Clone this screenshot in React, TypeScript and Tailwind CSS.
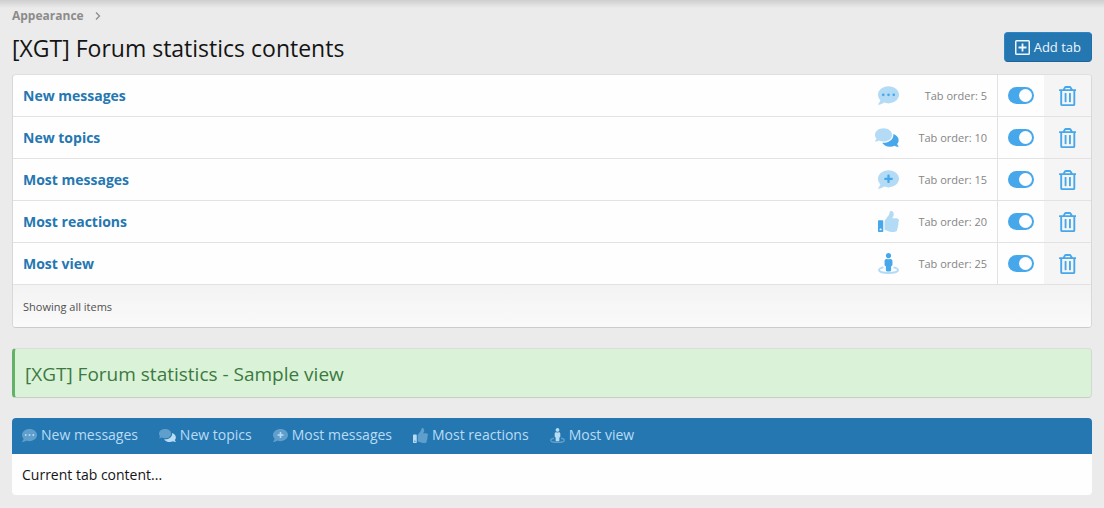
import { useState } from "react";
import type { ReactNode } from "react";

const bubble =
  "M256 32C114.6 32 0 125.1 0 240c0 49.6 21.4 95 57 130.7C44.5 421.1 2.7 466 2.2 466.5c-2.2 2.3-2.8 5.7-1.5 8.7S4.8 480 8 480c66.3 0 116-31.8 140.6-51.4 32.7 12.3 69 19.4 107.4 19.4 141.4 0 256-93.1 256-208S397.4 32 256 32z";

type IconName = "dots" | "comments" | "plus" | "thumb" | "view";

// Two-tone icons: the faded layer sits at 40% opacity
const icons: Record<IconName, { width: number; body: ReactNode }> = {
  dots: {
    width: 512,
    body: (
      <>
        <path opacity=".4" d={bubble} />
        <circle cx="128" cy="240" r="32" />
        <circle cx="256" cy="240" r="32" />
        <circle cx="384" cy="240" r="32" />
      </>
    ),
  },
  comments: {
    width: 576,
    body: (
      <>
        <path
          opacity=".4"
          d="M416 192c0-88.4-93.1-160-208-160S0 103.6 0 192c0 34.3 14.1 65.9 38 92-13.4 30.2-35.5 54.2-35.8 54.5-2.2 2.3-2.8 5.7-1.5 8.7S4.8 352 8 352c36.6 0 66.9-12.3 88.7-25 32.2 15.7 70.3 25 111.3 25 114.9 0 208-71.6 208-160z"
        />
        <path d="M538 412c23.9-26 38-57.7 38-92 0-66.9-53.5-124.2-129.3-148.1.9 6.6 1.3 13.3 1.3 20.1 0 105.9-107.7 192-240 192-10.8 0-21.3-.8-31.7-1.9C207.8 439.6 281.8 480 368 480c41 0 79.1-9.2 111.3-25 21.8 12.7 52.1 25 88.7 25 3.2 0 6.1-1.9 7.3-4.8 1.3-2.9.7-6.3-1.5-8.7-.3-.3-22.4-24.2-35.8-54.5z" />
      </>
    ),
  },
  plus: {
    width: 512,
    body: (
      <>
        <path opacity=".4" d={bubble} />
        <path d="M360 230v20a18 18 0 0 1-18 18h-58v58a18 18 0 0 1-18 18h-20a18 18 0 0 1-18-18v-58h-58a18 18 0 0 1-18-18v-20a18 18 0 0 1 18-18h58v-58a18 18 0 0 1 18-18h20a18 18 0 0 1 18 18v58h58a18 18 0 0 1 18 18z" />
      </>
    ),
  },
  thumb: {
    width: 512,
    body: (
      <>
        <path
          opacity=".4"
          d="M384 81.452c0 42.416-25.97 66.208-33.277 94.548h101.723c33.397 0 59.397 27.746 59.553 58.098.084 17.938-7.546 37.249-19.439 49.197l-.11.11c9.836 23.337 8.237 56.037-9.308 79.469 8.681 25.895-.069 57.704-16.382 74.757 4.298 17.598 2.244 32.575-6.148 44.632C440.202 511.587 389.616 512 346.839 512l-2.845-.001c-48.287-.017-87.806-17.598-119.56-31.725-15.957-7.099-36.821-15.887-52.651-16.178-6.54-.12-11.783-5.457-11.783-11.998v-213.77c0-3.2 1.282-6.271 3.558-8.521 39.614-39.144 56.648-80.587 89.117-113.111 14.804-14.832 20.188-37.236 25.393-58.902C282.515 39.293 291.817 0 312 0c24 0 72 8 72 81.452z"
        />
        <path d="M104 224H24c-13.255 0-24 10.745-24 24v240c0 13.255 10.745 24 24 24h80c13.255 0 24-10.745 24-24V248c0-13.255-10.745-24-24-24zM64 472c-13.255 0-24-10.745-24-24s10.745-24 24-24 24 10.745 24 24-10.745 24-24 24z" />
      </>
    ),
  },
  view: {
    width: 512,
    body: (
      <>
        <path
          opacity=".4"
          fill="none"
          stroke="currentColor"
          strokeWidth="46"
          d="M136 350C66 364 24 388 24 414c0 42 104 74 232 74s232-32 232-74c0-26-42-50-112-64"
        />
        <path d="M256 128c35.35 0 64-28.65 64-64S291.35 0 256 0s-64 28.65-64 64 28.65 64 64 64zm-64 192v96c0 17.67 14.33 32 32 32h64c17.67 0 32-14.33 32-32v-96c17.67 0 32-14.33 32-32v-96c0-26.51-21.49-48-48-48h-11.8c-11.07 5.03-23.26 8-36.2 8s-25.13-2.97-36.2-8H208c-26.51 0-48 21.49-48 48v96c0 17.67 14.33 32 32 32z" />
      </>
    ),
  },
};

const tabs: { title: string; order: number; icon: IconName }[] = [
  { title: "New messages", order: 5, icon: "dots" },
  { title: "New topics", order: 10, icon: "comments" },
  { title: "Most messages", order: 15, icon: "plus" },
  { title: "Most reactions", order: 20, icon: "thumb" },
  { title: "Most view", order: 25, icon: "view" },
];

function TabIcon({ name, className }: { name: IconName; className: string }) {
  const icon = icons[name];
  return (
    <svg viewBox={`0 0 ${icon.width} 512`} fill="currentColor" aria-hidden="true" className={className}>
      {icon.body}
    </svg>
  );
}

function TrashIcon() {
  return (
    <svg viewBox="0 0 448 512" fill="currentColor" aria-hidden="true" className="h-5">
      <path d="M268 416h24a12 12 0 0 0 12-12V188a12 12 0 0 0-12-12h-24a12 12 0 0 0-12 12v216a12 12 0 0 0 12 12zM432 80h-82.41l-34-56.7A48 48 0 0 0 274.41 0H173.59a48 48 0 0 0-41.16 23.3L98.41 80H16A16 16 0 0 0 0 96v16a16 16 0 0 0 16 16h16v336a48 48 0 0 0 48 48h288a48 48 0 0 0 48-48V128h16a16 16 0 0 0 16-16V96a16 16 0 0 0-16-16zM171.84 50.91A6 6 0 0 1 177 48h94a6 6 0 0 1 5.15 2.91L293.61 80H154.39zM368 464H80V128h288zm-212-48h24a12 12 0 0 0 12-12V188a12 12 0 0 0-12-12h-24a12 12 0 0 0-12 12v216a12 12 0 0 0 12 12z" />
    </svg>
  );
}

export default function App() {
  const [enabled, setEnabled] = useState(tabs.map(() => true));

  const toggle = (index: number) => {
    setEnabled(enabled.map((value, i) => (i === index ? !value : value)));
  };

  return (
    <div className="min-h-screen bg-[#ebebeb] font-['Open_Sans','Noto_Sans',sans-serif] text-[14px] leading-5 text-[#141414]">
      {/* Shadow of the header above */}
      <div className="h-2 bg-linear-to-b from-[#cfcfcf] to-[#ebebeb]" />

      <main className="px-3 pb-3">
        <nav aria-label="Breadcrumb" className="flex h-4 items-center gap-2.5 text-[12px] leading-4 font-bold text-[#8c8c8c]">
          <a href="#appearance">Appearance</a>
          <svg viewBox="0 0 8 10" fill="none" stroke="currentColor" strokeWidth="1.3" aria-hidden="true" className="h-2.5 w-2">
            <path d="M2 1.5l3.5 3.5-3.5 3.5" />
          </svg>
        </nav>

        <div className="mt-2 mb-3 flex items-center justify-between">
          <h1 className="pt-0.5 text-[23px] leading-7">[XGT] Forum statistics contents</h1>
          <button className="flex h-[30px] items-center gap-1 rounded border border-t-[#2b86c8] border-r-[#1f6ea8] border-b-[#1f6498] border-l-[#2b86c8] bg-[#2577b1] px-2.5 text-[13px] text-[#edf6fd]">
            <svg viewBox="0 0 15 15" fill="none" stroke="currentColor" aria-hidden="true" className="size-[15px]">
              <rect x=".75" y=".75" width="13.5" height="13.5" rx=".8" strokeWidth="1.5" />
              <path d="M7.5 3.5v8M3.5 7.5h8" strokeWidth="1.8" />
            </svg>
            Add tab
          </button>
        </div>

        <section className="overflow-hidden rounded border border-t-[#dfdfdf] border-r-[#d8d8d8] border-b-[#cbcbcb] border-l-[#d8d8d8] bg-[#fefefe]">
          <ul>
            {tabs.map((tab, index) => (
              <li key={tab.title} className="flex h-[42px] items-stretch border-b border-[#e2e2e2]">
                <a href="#edit" className="flex flex-1 items-center px-2.5 font-bold text-[#2577b1]">
                  {tab.title}
                </a>
                <div className="flex items-center pr-2.5 text-[#47a7eb]">
                  <TabIcon name={tab.icon} className="h-[21px]" />
                  <span className="w-[88px] text-right text-[11px] text-[#858585]">Tab order: {tab.order}</span>
                </div>
                <label className="flex w-[47px] items-center justify-center border-l border-[#e2e2e2]">
                  <input
                    type="checkbox"
                    aria-label={`Enable ${tab.title}`}
                    checked={enabled[index]}
                    onChange={() => toggle(index)}
                    className="flex h-[17px] w-[26px] cursor-pointer appearance-none items-center rounded-full bg-[#b5b5b5] px-0.5 before:size-[13px] before:rounded-full before:bg-[#fefefe] checked:justify-end checked:bg-[#47a7eb]"
                  />
                </label>
                <button aria-label={`Delete ${tab.title}`} className="flex w-[47px] items-center justify-center bg-[#f5f5f5] text-[#47a7eb]">
                  <TrashIcon />
                </button>
              </li>
            ))}
          </ul>
          <div className="flex h-[42px] items-center bg-linear-to-b from-[#f3f3f3] to-[#fafafa] px-2.5 pt-0.5 text-[11px] text-[#505050]">
            Showing all items
          </div>
        </section>

        <div className="mt-5 flex h-[50px] items-center rounded border border-l-[3px] border-t-[#d9dfd8] border-r-[#d0dacf] border-b-[#c5cfc4] border-l-[#63b265] bg-[#daf3d8] px-2.5 pt-0.5 text-[19px] text-[#3d793f]">
          [XGT] Forum statistics - Sample view
        </div>

        <section className="mt-5 overflow-hidden rounded bg-[#fefefe]">
          <nav aria-label="Sample tabs" className="flex h-9 gap-[21px] bg-[#2577b1] px-2.5 text-[#b9dcf5]">
            {tabs.map((tab) => (
              <a key={tab.title} href="#sample" className="flex items-center gap-1 pb-0.5">
                <TabIcon name={tab.icon} className="h-[15px]" />
                {tab.title}
              </a>
            ))}
          </nav>
          <p className="flex h-[41px] items-center px-2.5">Current tab content...</p>
        </section>
      </main>
    </div>
  );
}
